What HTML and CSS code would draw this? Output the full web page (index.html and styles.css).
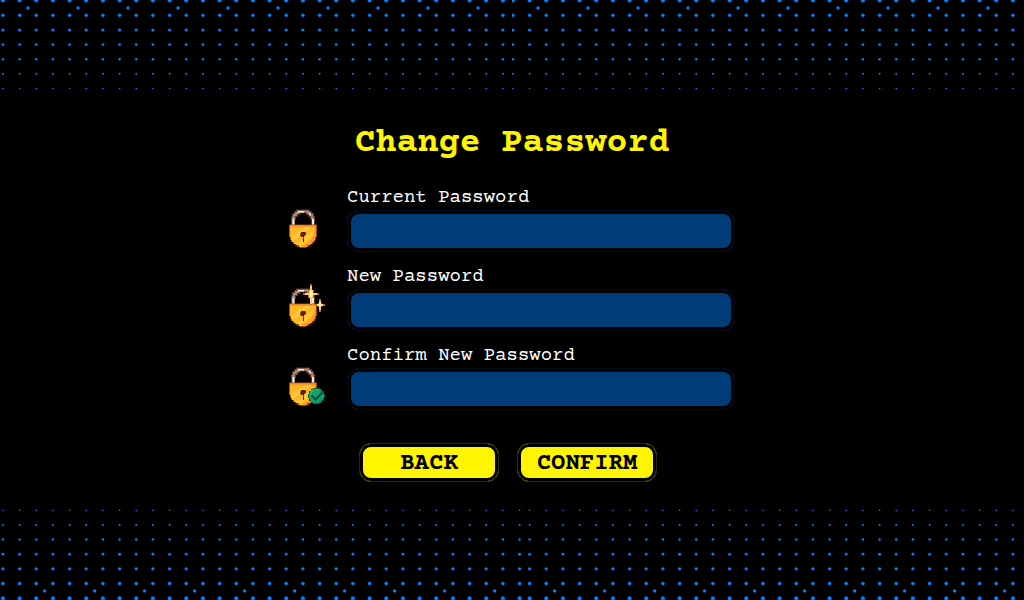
FILE: index.html
```html
<!DOCTYPE html>
<html lang="en">
<head>
<meta charset="utf-8">
<meta name="viewport" content="width=device-width, initial-scale=1">
<title>Change Password</title>
<link rel="stylesheet" href="styles.css">
</head>
<body>
<svg class="defs" aria-hidden="true">
  <defs>
    <g id="dot-column">
      <circle cy="0.6" r="2"/><circle cy="15.3" r="1.7"/><circle cy="30" r="1.6"/><circle cy="44.6" r="1.4"/><circle cy="59.2" r="1.2"/><circle cy="73.8" r="1"/><circle cy="88.5" r="0.8"/>
    </g>
    <g id="dot-column-up">
      <circle cy="0" r="0.8"/><circle cy="14.7" r="1"/><circle cy="29.3" r="1.2"/><circle cy="44" r="1.4"/><circle cy="58.6" r="1.6"/><circle cy="73.3" r="1.8"/><circle cy="88" r="2"/>
    </g>
    <pattern id="top-dots" width="50" height="100" patternUnits="userSpaceOnUse">
      <g fill="#0080ff"><use href="#dot-column" x="2.9"/><use href="#dot-column" x="19.6"/><use href="#dot-column" x="36.2"/><circle cx="28" cy="7.9" r="1.7"/></g>
    </pattern>
    <pattern id="bottom-dots" width="50" height="100" patternUnits="userSpaceOnUse">
      <g fill="#0080ff"><use href="#dot-column-up" x="2.9" y="10.2"/><use href="#dot-column-up" x="19.6" y="10.2"/><use href="#dot-column-up" x="36.2" y="10.2"/><circle cx="44.6" cy="90.9" r="1.7"/></g>
    </pattern>
    <g id="lock">
      <path d="M6 22V14H7V11H9V9H11V7.500H21V9H23V11H25V14H26V22" fill="none" stroke="#5a3828" stroke-width="4"/>
      <path d="M6 22V14H7V11H9V9H11V7.500H21V9H23V11H25V14H26V22" fill="none" stroke="#a99083" stroke-width="1.800"/>
      <path d="M5.500 22v-7h2v7zM25 22v-7h2v7zM11 7h6v1.500h-6zM22 9h1.500v2H22z" fill="#f3ece4"/>
      <path d="M2 20.500h28V33h-1v3h-1v2h-2v2h-2v1.500h-2V43h-3v1h-6v-1h-3v-1.500H8V40H6v-2H4v-2H3v-3H2z" fill="#9c481b"/>
      <path d="M3 21.500h26V33h-1v3h-1v2h-2v2h-2v1h-3v2h-8v-2H9v-1H7v-2H5v-2H4v-3H3z" fill="#ffb526"/>
      <path d="M18 23h7L6 37H5l-1-4zM28 25v5L14 42l-4-2z" fill="#ffc935"/>
      <path d="M3 21.500h26V23H3zM28 23h1v10h-1v3h-1v2h-2v2h-2v1h-3v2h-5v-2h3v-1h3v-2h2v-2h2v-3h1z" fill="#ff9620"/>
      <path d="M14 28h5v3h-1v1h-1v6h-1v-5h-2v-1h-1v-3h1z" fill="#5b2413"/>
      <path d="M13 29h1v2h-1zM16 33h1v1.500h-1zM18 28h1v1h-1z" fill="#b14e14"/>
    </g>
  </defs>
</svg>

<div class="page">
  <div class="dots dots-top" aria-hidden="true">
    <svg><rect width="100%" height="100%" fill="url(#top-dots)"/></svg>
    <svg><rect width="110%" height="100%" fill="url(#top-dots)" transform="translate(-2 0)"/></svg>
  </div>

  <main class="panel">
    <h1 class="title">Change Password</h1>
    <form class="form">
      <div class="row">
        <svg class="icon" viewBox="0 0 40 46" aria-hidden="true"><use href="#lock" y="-1"/></svg>
        <div class="field">
          <label class="label" for="current">Current Password</label>
          <input class="input" id="current" type="password">
        </div>
      </div>
      <div class="row">
        <svg class="icon" viewBox="0 0 40 46" aria-hidden="true">
          <use href="#lock" y="-1"/>
          <path d="M23 0h2v6h2v3h5v2h-5v3h-2v7h-2v-7h-2v-3h-5V9h5V6h2z" fill="#a86126"/>
          <path d="M23 2h2v4h1v3h4v2h-4v3h-1v6h-2v-6h-1v-3h-4V9h4V6h1z" fill="#ffc964"/>
          <path d="M23 7h2v2h1v2h-1v2h-2v-2h-1V9h1z" fill="#fff5bd"/>
          <path d="M32 15h2v4h1v1h3v2h-3v1h-1v5h-2v-5h-1v-1h-3v-2h3v-1h1z" fill="#b27335"/>
          <path d="M32 17h2v3h2v2h-2v4h-2v-4h-2v-2h2z" fill="#ffd782"/>
          <path d="M32 20h2v2h-2z" fill="#fff8d0"/>
        </svg>
        <div class="field">
          <label class="label" for="new">New Password</label>
          <input class="input" id="new" type="password">
        </div>
      </div>
      <div class="row">
        <svg class="icon" viewBox="0 0 40 46" aria-hidden="true">
          <use href="#lock" y="-1"/>
          <path d="M26 25h7v1h2v2h2v3h1v4h-1v3h-2v2h-2v1h-7v-1h-2v-2h-2v-3h-1v-4h1v-3h2v-2h2z" fill="#075e45"/>
          <path d="M26 26h7v1h1v2h2v2h1v4h-1v2h-2v2h-2v1h-6v-1h-2v-2h-1v-2h-1v-4h1v-3h2v-1h1z" fill="#159e6c"/>
          <path d="M26 26h6v1h-5v2h-2v3h-2v-2h1v-3h2z" fill="#28b57b"/>
          <path d="M24.500 32.500l4 4 7-7" fill="none" stroke="#064c3e" stroke-width="2"/>
        </svg>
        <div class="field">
          <label class="label" for="confirm">Confirm New Password</label>
          <input class="input" id="confirm" type="password">
        </div>
      </div>
      <div class="actions">
        <button class="button" type="button">BACK</button>
        <button class="button" type="submit">CONFIRM</button>
      </div>
    </form>
  </main>

  <div class="dots dots-bottom" aria-hidden="true">
    <svg><rect width="100%" height="100%" fill="url(#bottom-dots)"/></svg>
    <svg><rect width="110%" height="100%" fill="url(#bottom-dots)" transform="translate(-14 0)"/></svg>
  </div>
</div>
</body>
</html>
```
FILE: styles.css
```css
* {
  box-sizing: border-box;
}

body {
  margin: 0;
  background: #000;
  color: #fff;
  font-family: "Courier Prime", "Courier New", Courier, "Liberation Mono", monospace;
}

.defs {
  position: absolute;
  width: 0;
  height: 0;
}

.page {
  display: flex;
  flex-direction: column;
  min-height: 100vh;
}

.dots {
  display: flex;
  height: 100px;
}

.dots svg {
  flex: 1;
  min-width: 0;
  height: 100%;
}

.dots-bottom svg:first-child {
  flex: 131;
}

.dots-bottom svg:last-child {
  flex: 125;
}

.panel {
  display: flex;
  flex: 1;
  flex-direction: column;
  align-items: center;
  gap: 24px;
  padding-top: 24px;
}

.title {
  margin: 0;
  color: #fff500;
  font-size: 35px;
  line-height: 40px;
}

.form {
  display: flex;
  flex-direction: column;
  gap: 15px;
  width: 100%;
  max-width: 450px;
  padding-right: 2px;
}

.row {
  display: flex;
  align-items: center;
  gap: 20px;
}

.icon {
  flex: none;
  width: 40px;
  height: 46px;
  margin-top: 16px;
}

.field {
  display: flex;
  flex: 1;
  flex-direction: column;
  gap: 2px;
  min-width: 0;
}

.label {
  font-size: 19px;
  line-height: 20px;
}

.input {
  width: 100%;
  height: 42px;
  padding: 0 12px;
  border: 1px solid #000c18;
  border-radius: 12px;
  background: #003c78;
  box-shadow: inset 0 0 0 3px #000;
  color: #fff;
  font: inherit;
  font-size: 19px;
}

.actions {
  display: flex;
  justify-content: center;
  gap: 18px;
  margin-top: 18px;
  padding-right: 6px;
}

.button {
  width: 140px;
  height: 39px;
  padding: 3px 0 0;
  border: 1px solid #2a2900;
  border-radius: 12px;
  background: #fff500;
  box-shadow: inset 0 0 0 3px #000;
  color: #000;
  font: inherit;
  font-size: 24px;
  font-weight: 700;
  line-height: 30px;
}
```
